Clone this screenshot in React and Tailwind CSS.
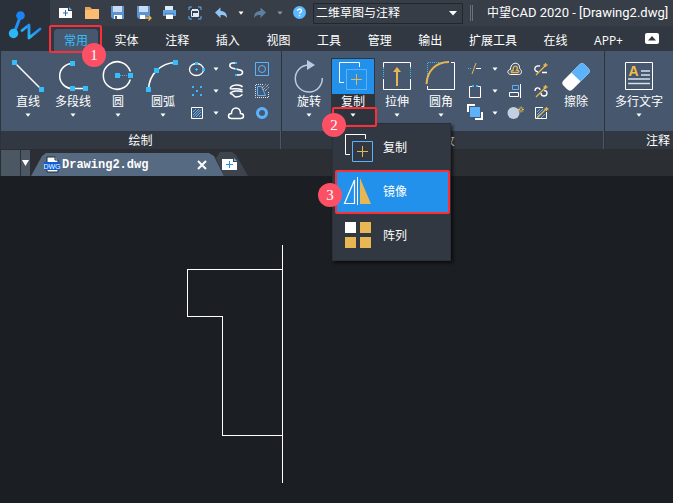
import React from 'react';

const SKY = '#35bdfb';
const BLUE = '#5cb3fb';
const GOLD = '#e9b654';

const Dot = ({ x, y, s = 5, c = SKY }) => (
  <rect x={x - s / 2} y={y - s / 2} width={s} height={s} fill={c} shapeRendering="crispEdges" />
);

const Icon = ({ size = 32, children }) => (
  <svg width={size} height={size} viewBox={`0 0 ${size} ${size}`} fill="none" stroke="none" className="shrink-0 overflow-visible" aria-hidden="true">
    {children}
  </svg>
);

const Caret = ({ color = '#fff' }) => (
  <svg width="6" height="4" viewBox="0 0 6 4" className="shrink-0" aria-hidden="true">
    <path d="M0.5 0.5h5L3 3.8z" fill={color} />
  </svg>
);

/* ---------- quick access icons ---------- */

const NewIcon = () => (
  <Icon size={16}>
    <path d="M2 3h9v3h4v7H2z" fill="#fff" />
    <path d="M12 2l3 3h-3z" fill={BLUE} />
    <path d="M8.500 5v6M6 8h5" stroke="#2f6ea8" />
  </Icon>
);
const OpenIcon = () => (
  <Icon size={16}>
    <path d="M2 2h5l2 2h7v10H2z" fill="#e8a557" />
    <path d="M2 5h6l1-1h7v10H2z" fill="#fbbd71" />
  </Icon>
);
const SaveIcon = () => (
  <Icon size={16}>
    <path d="M2 1h13v13H4l-2-2z" fill="#5d94d0" />
    <path d="M4 1h9v6H4z" fill="#c6ddf5" />
    <path d="M5 10h8v4H5z" fill="#fff" />
    <path d="M6 11h2v3H6z" fill="#3b6595" />
  </Icon>
);
const SaveAsIcon = () => (
  <Icon size={16}>
    <path d="M2 1h13v9l-5 4H4l-2-2z" fill="#5d94d0" />
    <path d="M4 1h9v6H4z" fill="#c6ddf5" />
    <path d="M5 10h5v4H5z" fill="#fff" />
    <path d="M10 13h6M13.500 10.500l2.500 2.500-2.500 2.500" stroke={GOLD} strokeWidth="1.300" />
  </Icon>
);
const PrintIcon = () => (
  <Icon size={16}>
    <path d="M4 1h8v4H4z" fill="#dbe9f8" />
    <path d="M2 5h13v6H2z" fill="#62a5e6" />
    <path d="M5 9h7v5H5z" fill="#fff" />
    <path d="M4 9h9" stroke="#35659a" />
  </Icon>
);
const PlotIcon = () => (
  <Icon size={16}>
    <path d="M2 5V2h3M11 2h3v3M14 11v3h-3M5 14H2v-3" stroke={BLUE} />
    <path d="M4.500 5.500h7v6h-7z" stroke="#dbe9f8" />
    <path d="M5 4h6v2H5zM6 8h5v4H6z" fill="#dbe9f8" />
  </Icon>
);
const UndoIcon = ({ color, flip }) => (
  <Icon size={16}>
    <g transform={flip ? 'translate(16 0) scale(-1 1)' : undefined}>
      <path d="M2 7.500L7.500 2.500v3.500c4 0 6.500 2 6.500 7-1.500-2.500-3.500-3-6.500-3v3z" fill={color} />
    </g>
  </Icon>
);
const HelpIcon = () => (
  <Icon size={16}>
    <circle cx="8.500" cy="7.500" r="6.500" fill="#5cb8ff" />
    <path d="M6.500 6c0-2.600 4-2.600 4-.2 0 1.500-2 1.500-2 3" stroke="#fff" strokeWidth="1.300" />
    <circle cx="8.500" cy="10.800" r=".8" fill="#fff" />
  </Icon>
);

const Logo = () => (
  <svg width="34" height="34" viewBox="0 0 34 34" fill="none" aria-label="ZWCAD">
    <defs>
      <linearGradient id="logoGrad" x1="0" y1="1" x2="1" y2="0">
        <stop offset="0" stopColor="#2bc4f5" />
        <stop offset="1" stopColor="#1a7df2" />
      </linearGradient>
    </defs>
    <path d="M6 24.500L12.500 7" stroke="#1f93f4" strokeWidth="3" />
    <circle cx="12.500" cy="6.500" r="4.300" fill="#1a84f5" />
    <circle cx="5.500" cy="24.500" r="4.700" fill="#2cb8f8" />
    <path d="M14 21.500L21 16v13L32 20" stroke="url(#logoGrad)" strokeWidth="2.800" strokeLinejoin="round" strokeLinecap="round" />
  </svg>
);

/* ---------- large ribbon icons ---------- */

const LineIcon = () => (
  <Icon>
    <path d="M2.500 2.500l27 27" stroke="#fff" strokeWidth="1.500" />
    <Dot x={2.5} y={2.5} />
    <Dot x={29.5} y={29.5} />
  </Icon>
);
const PolylineIcon = () => (
  <Icon>
    <path d="M15.500 3.500a12.800 12.500 0 0 0 0 25h13" stroke="#fff" strokeWidth="1.500" />
    <Dot x={15.5} y={3.5} />
    <Dot x={15.5} y={28.5} />
    <Dot x={28.5} y={28.5} />
  </Icon>
);
const CircleIcon = () => (
  <Icon>
    <path d="M28.300 11.500a13.800 13.800 0 1 0 0 8" stroke="#fff" strokeWidth="1.500" />
    <path d="M18 15.500h8" stroke={SKY} strokeDasharray="1 1" />
    <Dot x={15.5} y={15.5} />
    <Dot x={28.5} y={15.5} />
  </Icon>
);
const ArcIcon = () => (
  <Icon>
    <path d="M1.500 29.500C2 14 14 3 28.500 2.500" stroke="#fff" strokeWidth="1.500" />
    <Dot x={1.5} y={29.5} />
    <Dot x={9.5} y={10.5} />
    <Dot x={28.5} y={2.5} />
  </Icon>
);
const RotateIcon = () => (
  <Icon>
    <path d="M29.300 18a13.500 13.500 0 1 1-14.300-13" stroke="#b9cbe2" strokeWidth="1.500" />
    <path d="M14 0l8 5-8 5z" fill="#b9cbe2" />
  </Icon>
);
const CopyIcon = () => (
  <Icon>
    <path d="M22.500 7V2.500h-20v20H7" stroke="#fff" />
    <path d="M9.500 9.500h20v20h-20z" stroke={BLUE} />
    <path d="M19.500 14v11M14 19.500h11" stroke={GOLD} />
  </Icon>
);
const StretchIcon = () => (
  <Icon>
    <path d="M2.500 7.500v-5h27v5M2.500 19v10.500h27V19" stroke="#fff" />
    <path d="M2.500 8v10M29.500 8v10" stroke={SKY} strokeDasharray="1 1" />
    <path d="M16 26V10" stroke={GOLD} strokeWidth="2" />
    <path d="M12 12l4-5 4 5z" fill={GOLD} />
  </Icon>
);
const FilletIcon = () => (
  <Icon>
    <path d="M26 2.500h3.500v27h-27V26" stroke="#fff" />
    <path d="M2.500 16V2.500H14" stroke={SKY} strokeDasharray="1 1" />
    <path d="M1.500 24C2 11 11 2 24 2" stroke={GOLD} strokeWidth="2" />
  </Icon>
);
const EraseIcon = () => (
  <Icon>
    <g transform="translate(16 17) rotate(-45)">
      <rect x="-15" y="-6.500" width="30" height="13" rx="4" fill="#fff" />
      <path d="M0-6.500h11a4 4 0 0 1 4 4v5a4 4 0 0 1-4 4H0z" fill={BLUE} />
    </g>
  </Icon>
);
const MTextIcon = () => (
  <Icon>
    <path d="M2.500 2.500h27v27h-27z" stroke="#fff" />
    <text x="5.500" y="16" fill="#f4bf45" fontSize="14" fontWeight="700" fontFamily="Liberation Sans, sans-serif">A</text>
    <path d="M18 11h9M18 15h9M5 19h22M5 23.500h22" stroke="#d4e0f0" strokeWidth="1.500" />
  </Icon>
);

/* ---------- small ribbon icons ---------- */

const smallIcons = {
  椭圆: (
    <>
      <ellipse cx="8.500" cy="9.500" rx="7" ry="6" stroke="#fff" strokeWidth="1.300" />
      <path d="M8.500 8v3M7 9.500h3" stroke={SKY} />
      <Dot x={8.5} y={3.5} s={3} />
      <Dot x={15.5} y={9.5} s={3} />
    </>
  ),
  点: (
    <>
      <Dot x={5} y={5} s={2} />
      <Dot x={13} y={5} s={2} />
      <Dot x={9} y={9} s={2} />
      <Dot x={5} y={13} s={2} />
      <Dot x={13} y={13} s={2} />
    </>
  ),
  填充: (
    <>
      <path d="M3.500 3.500h11v11h-11z" stroke="#fff" />
      <path d="M5 8l3-3M5 11l6-6M5 13.500l8-8M8 13l5-5M11 13l2-2" stroke={BLUE} />
    </>
  ),
  样条曲线: (
    <>
      <path d="M9 3H6C2 3 2 7 5 8l8 2c4 1 3 5-1 5H9" stroke="#fff" strokeWidth="1.500" />
      <Dot x={9} y={3} s={2} />
      <Dot x={9} y={9} s={2} />
      <Dot x={9} y={15} s={2} />
    </>
  ),
  螺旋: (
    <path d="M3 6.500C4.500 2 13.500 2 15.500 5M3 6.500c3 1.500 5-1.500 12.500 1.500M3 11.500c2-3 10-3 12.500-1.500M3 11.500c4 0 3 3.500 6 3.500s5-1 6.500-2.500" stroke="#fff" strokeWidth="1.500" />
  ),
  云线: (
    <path d="M4.500 14.500c-4 0-4-5 0-5C4.500 2 13.500 2 13.500 9.500c4 0 4 5 0 5z" stroke="#fff" strokeWidth="1.500" />
  ),
  面域: (
    <>
      <path d="M2.500 2.500h13v13h-13z" stroke={BLUE} />
      <circle cx="9" cy="9" r="3.500" stroke={BLUE} />
    </>
  ),
  边界: (
    <>
      <path d="M10 2.500H2.500v13h13V9" stroke="#dce6f2" strokeDasharray="1 1" />
      <path d="M4.500 4.500h4l4 9h-8z" stroke={BLUE} />
      <path d="M9 6l4-4M10 8l6-6M12 9l4-4" stroke="#dce6f2" strokeDasharray="1 1" />
    </>
  ),
  圆环: <circle cx="9" cy="9" r="4.500" stroke={BLUE} strokeWidth="3" />,
  修剪: (
    <>
      <path d="M1 8.500h4" stroke={SKY} strokeDasharray="1 1" />
      <path d="M9 8.500h5" stroke="#fff" />
      <path d="M5 14L9 3" stroke={GOLD} />
    </>
  ),
  拉长: (
    <>
      <path d="M5 4.500H2.500v11h11v-11H11" stroke="#fff" />
      <Dot x={6} y={4} s={2} />
      <Dot x={10} y={4} s={2} />
    </>
  ),
  前置: (
    <>
      <path d="M0 0h8v2H2v6H0zM16 16H8v-2h6V8h2z" fill="#fff" />
      <path d="M3 3h10v10H3z" fill={BLUE} />
    </>
  ),
  偏移: (
    <>
      <path d="M4.500 14.500c-4-1-3-5 0-5 0-8 9-8 9-2 0 2 2 2 2 4s-1 3-3 3z" stroke="#fff" />
      <path d="M5.500 12.500c-1-1 0-2 1.500-2 0-6 4.500-5 4.500-2l-1 1.500c3 0 3 2.500 1 2.500z" stroke={GOLD} strokeWidth="1.300" />
    </>
  ),
  对齐: (
    <>
      <path d="M6.500 3.500h6v4h-6z" stroke={BLUE} />
      <path d="M3.500 10.500h9v4h-9zM14.500 2v14" stroke="#fff" />
    </>
  ),
  分解: (
    <>
      <circle cx="7.500" cy="9" r="6" fill="#c4cfe2" />
      <path d="M15 2.500v6M12 5.500h6M13 3.500l4 4M17 3.500l-4 4" stroke="#f3c14b" />
      <circle cx="15" cy="5.500" r="1" fill="#47586e" />
    </>
  ),
  编辑多段线: (
    <>
      <path d="M8 6C2 5 1 11 6 12M10 12.500h5" stroke="#fff" strokeWidth="1.300" />
      <path d="M4 15L13 6M13.500 3v4M11.500 5h4" stroke={GOLD} strokeWidth="1.300" />
    </>
  ),
  编辑样条: (
    <>
      <path d="M3 9c0-4 5-4 5-1M9 11c0 4 6 4 6 0 0-2-2-3-3-2" stroke="#fff" strokeWidth="1.300" />
      <path d="M4 15L13 6M13.500 3v4M11.500 5h4" stroke={GOLD} strokeWidth="1.300" />
    </>
  ),
  编辑填充: (
    <>
      <path d="M11 3.500H3.500v11h11V8" stroke="#fff" />
      <path d="M5 8l3-3M5 11l6-6M9 14l4-4M5 13l3-3" stroke={BLUE} />
      <path d="M5 14L14 5M14.500 3v4M12.500 5h4" stroke={GOLD} strokeWidth="1.300" />
    </>
  ),
};

const SmallTools = ({ rows }) => (
  <div className="grid grid-cols-[22px_16px_24px_27px] auto-rows-[22px] content-start pt-[7px]">
    {rows.map(([a, b, c]) => (
      <React.Fragment key={a}>
        <button aria-label={a} className="flex items-center justify-center">
          <Icon size={18}>{smallIcons[a]}</Icon>
        </button>
        <button aria-label={`${a}选项`} className="flex items-center justify-center">
          <Caret />
        </button>
        <button aria-label={b} className="flex items-center justify-center">
          <Icon size={18}>{smallIcons[b]}</Icon>
        </button>
        <button aria-label={c} className="flex items-center justify-center">
          <Icon size={18}>{smallIcons[c]}</Icon>
        </button>
      </React.Fragment>
    ))}
  </div>
);

const BigTool = ({ label, icon, arrow = true, wide = false }) => (
  <button className={`flex shrink-0 flex-col items-center pt-[9px] ${wide ? 'w-14' : 'w-11'}`}>
    {icon}
    <span className="mt-0.5 h-4 whitespace-nowrap leading-4">{label}</span>
    {arrow && (
      <span className="mt-[3px]">
        <Caret />
      </span>
    )}
  </button>
);

const Badge = ({ n, className }) => (
  <span className={`absolute z-30 flex h-6 w-6 items-center justify-center rounded-full bg-[#fc5064] font-['Liberation_Serif',serif] text-[15px] leading-none text-white ${className}`}>
    {n}
  </span>
);

const MirrorIcon = () => (
  <Icon>
    <path d="M11.500 4v23.500h-10z" stroke="#fff" strokeWidth="1.200" />
    <path d="M14.500 1v28" stroke="#fff" />
    <path d="M17 2v26h11z" fill={GOLD} />
  </Icon>
);
const ArrayIcon = () => (
  <Icon>
    <path d="M2 2h11v11H2z" fill="#fff" />
    <path d="M17 2h11v11H17zM2 17h11v11H2zM17 17h11v11H17z" fill={GOLD} />
  </Icon>
);

const MenuItem = ({ icon, label, active = false }) => (
  <button
    role="menuitem"
    className={`flex h-11 w-full items-center gap-2 rounded-xs border-2 pl-[6px] ${active ? 'border-[#fb2f38] bg-[#2191ec]' : 'border-transparent'}`}
  >
    {icon}
    <span>{label}</span>
  </button>
);

const CopyTool = () => (
  <div className="relative w-11 shrink-0 pt-[7px]">
    <button className="flex h-[73px] w-full flex-col items-center border border-[#2f363f] bg-[#2d343d]">
      <span className="flex h-[35px] w-full justify-center bg-[#2191ec] pt-px">
        <CopyIcon />
      </span>
      <span className="h-4 leading-4">复制</span>
      <span className="mt-[3px]">
        <Caret />
      </span>
    </button>
    <div className="absolute left-px top-14 z-20 h-5 w-[45px] rounded-xs border-2 border-[#fb2f38]" />
    <Badge n="2" className="-left-[9px] top-[62px]" />
    <div role="menu" className="absolute left-px top-[72px] z-10 w-[119px] border border-[#2a3038] bg-[#323841] py-[2px] pl-[2px] shadow-[2px_2px_3px_rgba(0,0,0,0.6)]">
      <MenuItem icon={<CopyIcon />} label="复制" />
      <MenuItem icon={<MirrorIcon />} label="镜像" active />
      <MenuItem icon={<ArrayIcon />} label="阵列" />
    </div>
    <Badge n="3" className="-left-[13px] top-[132px]" />
  </div>
);

const Group = ({ title, className = '', children }) => (
  <section className={`flex flex-col ${className}`}>
    <div className="flex h-20 bg-[#47586e]">{children}</div>
    <h2 className="h-[18px] border-r border-[#47586e] bg-[#323841] text-center leading-5">{title}</h2>
  </section>
);

const tabs = ['实体', '注释', '插入', '视图', '工具', '管理', '输出', '扩展工具', '在线', 'APP+'];

export default function App() {
  return (
    <div className="flex min-h-screen w-full flex-col overflow-hidden bg-[#1b1e22] font-['Open_Sans','Noto_Sans_CJK_SC',sans-serif] text-xs text-white">
      <header className="flex h-[51px] bg-[#323841]">
        <div className="flex w-[50px] shrink-0 items-center justify-end bg-[#2b313a] pr-2">
          <Logo />
        </div>
        <div className="flex min-w-0 flex-1 flex-col">
          <div className="flex h-[26px] items-center bg-[#373e48] pl-[7px]">
            <div className="flex shrink-0 items-center gap-[10px]">
              <button aria-label="新建"><NewIcon /></button>
              <button aria-label="打开"><OpenIcon /></button>
              <button aria-label="保存"><SaveIcon /></button>
              <button aria-label="另存为"><SaveAsIcon /></button>
              <button aria-label="打印"><PrintIcon /></button>
              <button aria-label="打印预览"><PlotIcon /></button>
              <button aria-label="撤销"><UndoIcon color="#8fc4f8" /></button>
            </div>
            <button aria-label="撤销列表" className="ml-[9px]"><Caret /></button>
            <button aria-label="重做" className="ml-2"><UndoIcon color="#5f7f9f" flip /></button>
            <button aria-label="重做列表" className="ml-[9px]"><Caret color="#8f959c" /></button>
            <button aria-label="帮助" className="ml-2"><HelpIcon /></button>
            <div className="relative ml-[6px] shrink-0">
              <select aria-label="工作空间" className="block h-[21px] w-[150px] appearance-none border border-[#22272d] bg-[#363d47] pl-[2px] text-xs leading-none text-white outline-none">
                <option>二维草图与注释</option>
              </select>
              <svg width="8" height="5" viewBox="0 0 8 5" className="pointer-events-none absolute right-[6px] top-2" aria-hidden="true">
                <path d="M0 0h8L4 4.500z" fill="#fff" />
              </svg>
            </div>
            <span className="ml-[7px] h-4 w-[3px] shrink-0 border-x border-[#6a717a]" />
            <h1 className="ml-[14px] whitespace-nowrap font-['Roboto','Noto_Sans_CJK_SC',sans-serif] text-[13px]">
              <span className="text-xs">中望</span>CAD 2020 - [Drawing2.dwg]
            </h1>
          </div>
          <div className="flex flex-1 items-center pr-[14px]">
            <nav className="flex h-full flex-1 items-end justify-between pl-1">
              <div className="relative">
                <button className="block h-[22px] rounded-t-sm bg-[#47586e] px-[10px] leading-6 text-[#35bdfb]">常用</button>
                <div className="absolute -left-[5px] -top-1 z-10 h-7 w-[53px] rounded-xs border-2 border-[#fb2f38]" />
                <Badge n="1" className="left-7 top-[14px]" />
              </div>
              {tabs.map((t) => (
                <button key={t} className="h-[22px] whitespace-nowrap px-[10px] leading-6">{t}</button>
              ))}
            </nav>
            <button aria-label="收起功能区" className="ml-3 flex h-[11px] w-[14px] items-center justify-center rounded-xs bg-white">
              <svg width="8" height="5" viewBox="0 0 8 5" aria-hidden="true">
                <path d="M0 4.500h8L4 0z" fill="#323841" />
              </svg>
            </button>
          </div>
        </div>
      </header>

      <div className="flex gap-px bg-[#2c333c] pl-px">
        <Group title="绘制" className="shrink-0">
          <div className="flex gap-px pl-[5px]">
            <BigTool label="直线" icon={<LineIcon />} />
            <BigTool label="多段线" icon={<PolylineIcon />} />
            <BigTool label="圆" icon={<CircleIcon />} />
            <BigTool label="圆弧" icon={<ArcIcon />} />
          </div>
          <div className="pl-px pr-[6px]">
            <SmallTools
              rows={[
                ['椭圆', '样条曲线', '面域'],
                ['点', '螺旋', '边界'],
                ['填充', '云线', '圆环'],
              ]}
            />
          </div>
        </Group>
        <Group title="修改" className="shrink-0">
          <div className="flex pl-[5px]">
            <BigTool label="旋转" icon={<RotateIcon />} />
            <CopyTool />
            <BigTool label="拉伸" icon={<StretchIcon />} />
            <BigTool label="圆角" icon={<FilletIcon />} />
          </div>
          <div className="flex pl-[2px] pr-[6px]">
            <SmallTools
              rows={[
                ['修剪', '偏移', '编辑多段线'],
                ['拉长', '对齐', '编辑样条'],
                ['前置', '分解', '编辑填充'],
              ]}
            />
            <BigTool label="擦除" icon={<EraseIcon />} arrow={false} />
          </div>
        </Group>
        <Group title="注释" className="min-w-[107px] flex-1">
          <div className="flex pl-[6px]">
            <BigTool label="多行文字" icon={<MTextIcon />} wide />
          </div>
        </Group>
      </div>

      <div className="flex h-[27px] items-end bg-[#2b2e33] pl-px">
        <div className="h-[26px] w-[19px] bg-[#4b5864]" />
        <button aria-label="文档列表" className="ml-px flex h-[26px] w-[9px] items-center justify-center bg-[#4b5864]">
          <svg width="7" height="6" viewBox="0 0 7 6" aria-hidden="true">
            <path d="M0 0h7L3.500 6z" fill="#fff" />
          </svg>
        </button>
        <div className="ml-px flex h-[23px] w-[193px] items-center bg-[#566a82] pl-[13px] pr-[17px] [clip-path:polygon(0_100%,11px_3px,15px_0,178px_0,183px_3px,100%_100%)]">
          <svg width="17" height="17" viewBox="0 0 17 17" className="shrink-0" aria-hidden="true">
            <path d="M3 1h8l3 3v12H3z" fill="#fff" stroke="#1c2b3c" />
            <path d="M11 1v3h3" fill="#c9d4e2" stroke="#1c2b3c" />
            <rect y="6" width="16" height="8" fill="#0d5fd8" />
            <text x="8" y="13" textAnchor="middle" fontSize="7" fontFamily="Liberation Sans, sans-serif" fill="#fff">DWG</text>
          </svg>
          <span className="pl-px font-['Liberation_Mono',monospace] text-xs font-bold leading-4">Drawing2.dwg</span>
          <button aria-label="关闭" className="ml-auto">
            <svg width="10" height="10" viewBox="0 0 10 10" aria-hidden="true">
              <path d="M1 1l8 8M9 1l-8 8" stroke="#fff" strokeWidth="2" />
            </svg>
          </button>
        </div>
        <button aria-label="新建图形" className="-ml-2 flex h-6 w-8 items-center bg-[#3d444d] pl-[6px] [clip-path:polygon(0_6px,4px_0,16px_0,20px_3px,100%_100%,8px_100%)]">
          <svg width="16" height="12" viewBox="0 0 16 12" aria-hidden="true">
            <path d="M0 1h11v3h4v8H0z" fill="#fff" />
            <path d="M12 0l3 3h-3z" fill={BLUE} />
            <path d="M7.500 3v7M4 6.500h7" stroke="#2191ec" />
          </svg>
        </button>
      </div>

      <main className="flex-1 pl-[187px] pt-[69px]">
        <svg width="97" height="238" viewBox="0 0 97 238" fill="none" stroke="#fff" shapeRendering="crispEdges" role="img" aria-label="图形">
          <path d="M95.500 0v238M95.500 24.500H.5v47h35v119h60" />
        </svg>
      </main>
    </div>
  );
}
